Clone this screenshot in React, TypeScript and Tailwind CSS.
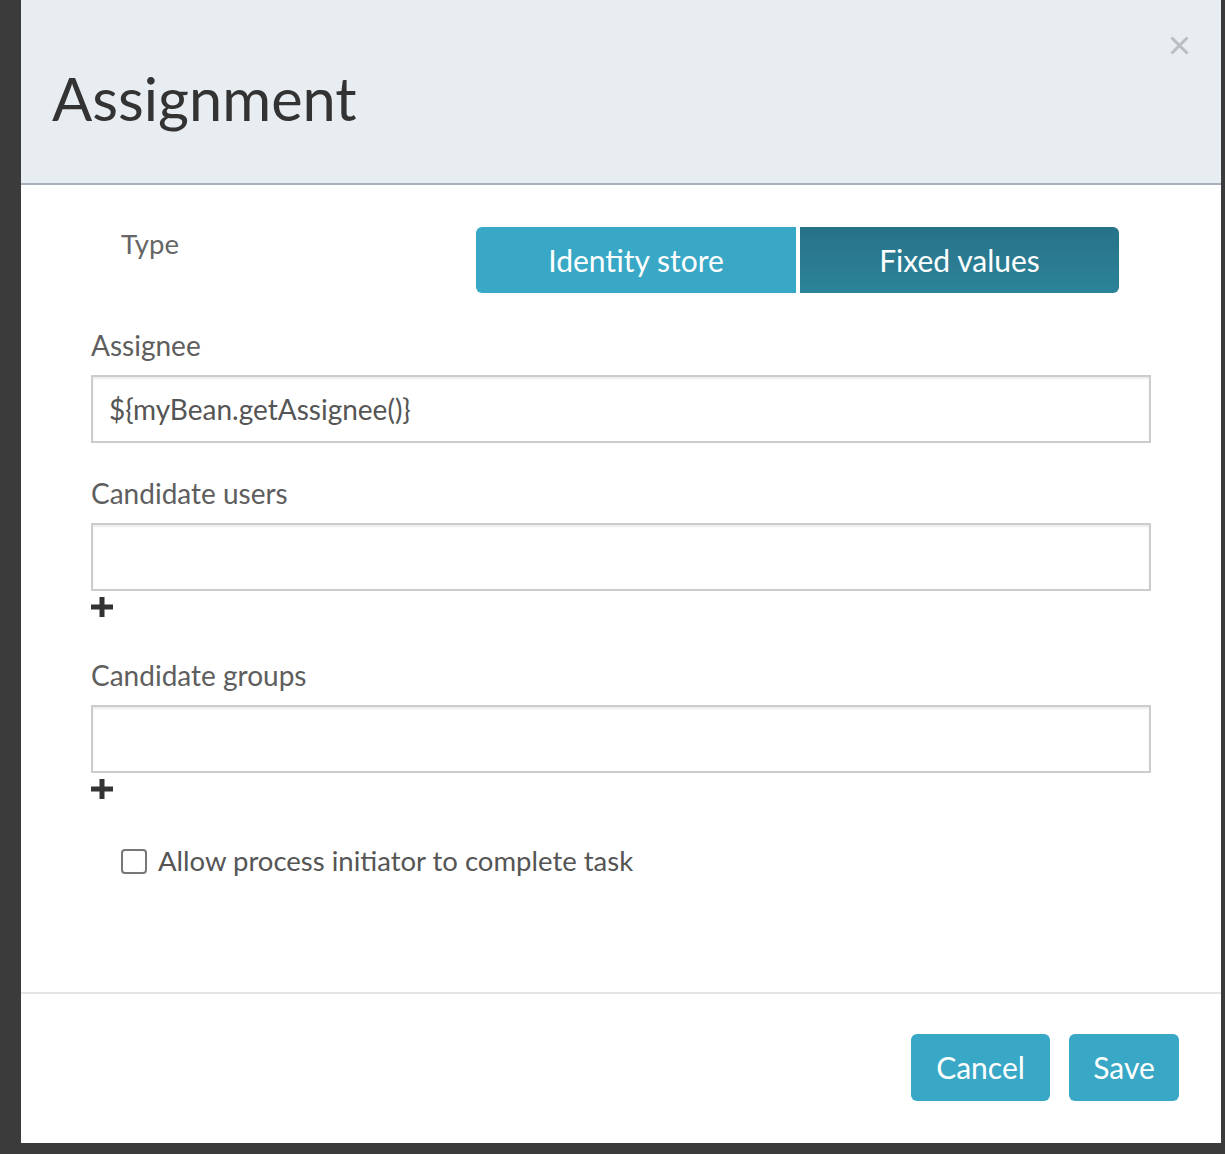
import { useState } from 'react';

function Plus() {
  return (
    <div className="h-[34px] pt-[6px]">
      <svg width="22" height="20" viewBox="0 0 22 20" className="block">
        <rect x="8.5" y="0" width="5" height="20" fill="#333" />
        <rect x="0" y="7.5" width="22" height="5" fill="#333" />
      </svg>
    </div>
  );
}

function Field({ label, value, plus }: { label: string; value?: string; plus?: boolean }) {
  return (
    <div className="flex flex-col">
      <label className="text-[28px] leading-[40px] text-[#5e5e5e] pt-[1px] mb-[10px]">{label}</label>
      <input
        type="text"
        defaultValue={value}
        className="h-[68px] w-[1060px] border-2 border-[#cccccc] px-[16px] text-[28px] text-[#555] shadow-[inset_0_2px_2px_rgba(0,0,0,0.075)] focus:outline-none"
      />
      {plus && <Plus />}
    </div>
  );
}

export default function App() {
  const [mode, setMode] = useState<'identity' | 'fixed'>('fixed');
  const [allow, setAllow] = useState(false);

  return (
    <div
      className="w-[1225px] h-[1154px] bg-[#3b3b3b] pl-[21px] pr-[4px] pb-[11px]"
      style={{ fontFamily: 'Lato, "Open Sans", sans-serif' }}
    >
      <div className="h-full bg-white flex flex-col">
        {/* header */}
        <div className="relative h-[185px] shrink-0 bg-[#e8edf1] border-b-2 border-[#a7b0bc]">
          <h2 className="pl-[31px] pt-[65px] text-[59.5px] leading-[66px] text-[#333]">Assignment</h2>
          <button className="absolute right-[32px] top-[36px]" aria-label="Close">
            <svg width="19" height="19" viewBox="0 0 19 19" className="block">
              <path d="M1.5 1.5 L17.5 17.5 M17.5 1.5 L1.5 17.5" stroke="#babec1" strokeWidth="3" />
            </svg>
          </button>
        </div>

        {/* body */}
        <div className="flex-1 pl-[70px] pt-[39px]">
          <div className="flex items-start">
            <div className="w-[385px] pl-[30px] text-[27.5px] leading-[40px] text-[#666]">Type</div>
            <div className="flex gap-[4px] mt-[3px]">
              <button
                onClick={() => setMode('identity')}
                className={`w-[320px] h-[66px] rounded-l-[6px] text-white text-[30px] ${
                  mode === 'identity' ? 'bg-gradient-to-b from-[#267189] to-[#2b8198]' : 'bg-[#39a8c6]'
                }`}
              >
                Identity store
              </button>
              <button
                onClick={() => setMode('fixed')}
                className={`w-[319px] h-[66px] rounded-r-[6px] text-white text-[30px] ${
                  mode === 'fixed' ? 'bg-gradient-to-b from-[#277289] to-[#2c8399]' : 'bg-[#39a8c6]'
                }`}
              >
                Fixed values
              </button>
            </div>
          </div>

          <div className="mt-[31px] flex flex-col gap-[29px]">
            <Field label="Assignee" value="${myBean.getAssignee()}" />
            <Field label="Candidate users" plus />
            <Field label="Candidate groups" plus />
          </div>

          <label className="mt-[34px] ml-[30px] flex items-center gap-[11px] text-[27.5px] leading-[40px] text-[#555] cursor-pointer">
            <span
              onClick={() => setAllow(!allow)}
              className="w-[26px] h-[25px] rounded-[4px] border-2 border-[#777] bg-white flex items-center justify-center"
            >
              {allow && <span className="w-[12px] h-[12px] bg-[#555]" />}
            </span>
            Allow process initiator to complete task
          </label>
        </div>

        {/* footer */}
        <div className="h-[151px] shrink-0 border-t-2 border-[#e5e5e5] flex justify-end gap-[19px] pt-[40px] pr-[42px]">
          <button className="w-[139px] h-[67px] rounded-[6px] bg-[#39a8c6] text-white text-[30px]">Cancel</button>
          <button className="w-[110px] h-[67px] rounded-[6px] bg-[#39a8c6] text-white text-[30px]">Save</button>
        </div>
      </div>
    </div>
  );
}
